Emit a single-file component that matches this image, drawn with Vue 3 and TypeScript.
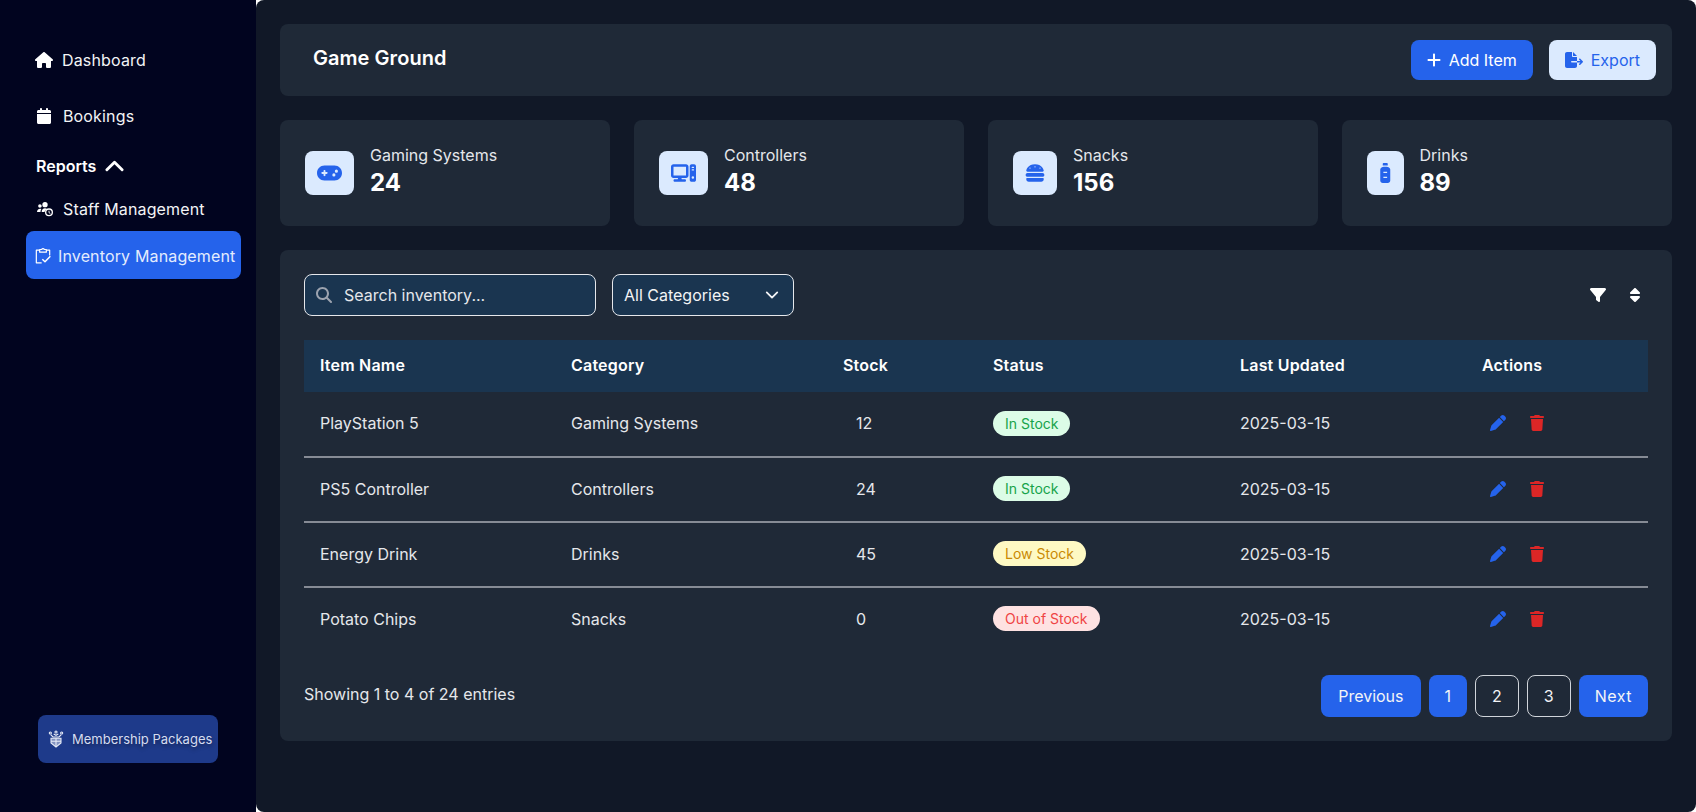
<script setup lang="ts">
interface Stat {
  label: string;
  value: number;
  viewBox: string;
  path: string;
}

interface InventoryRow {
  name: string;
  category: string;
  stock: number;
  status: string;
  statusClass: string;
  updated: string;
}

const stats: Stat[] = [
  {
    label: 'Gaming Systems',
    value: 24,
    viewBox: '0 0 640 512',
    path: 'M192 64C86 64 0 150 0 256S86 448 192 448H448c106 0 192-86 192-192s-86-192-192-192H192zM496 168a40 40 0 1 1 0 80 40 40 0 1 1 0-80zM392 304a40 40 0 1 1 80 0 40 40 0 1 1 -80 0zM168 200c0-13.3 10.7-24 24-24s24 10.7 24 24v32h32c13.3 0 24 10.7 24 24s-10.7 24-24 24H216v32c0 13.3-10.7 24-24 24s-24-10.7-24-24V280H136c-13.3 0-24-10.7-24-24s10.7-24 24-24h32V200z',
  },
  {
    label: 'Controllers',
    value: 48,
    viewBox: '0 0 640 512',
    path: 'M384 96V320H64L64 96H384zM64 32C28.7 32 0 60.7 0 96V320c0 35.3 28.7 64 64 64H181.3l-10.7 32H96c-17.7 0-32 14.3-32 32s14.3 32 32 32H352c17.7 0 32-14.3 32-32s-14.3-32-32-32H277.3l-10.7-32H384c35.3 0 64-28.7 64-64V96c0-35.3-28.7-64-64-64H64zm464 0c-26.5 0-48 21.5-48 48V432c0 26.5 21.5 48 48 48h64c26.5 0 48-21.5 48-48V80c0-26.5-21.5-48-48-48H528zm16 64h32c8.8 0 16 7.2 16 16s-7.2 16-16 16H544c-8.8 0-16-7.2-16-16s7.2-16 16-16zm-16 80c0-8.8 7.2-16 16-16h32c8.8 0 16 7.2 16 16s-7.2 16-16 16H544c-8.8 0-16-7.2-16-16zm32 160a32 32 0 1 1 0 64 32 32 0 1 1 0-64z',
  },
  {
    label: 'Snacks',
    value: 156,
    viewBox: '0 0 512 512',
    path: 'M61.1 224C45 224 32 211 32 194.9c0-1.9 .2-3.7 .6-5.6C37.9 168.3 78.8 32 256 32s218.1 136.3 223.4 157.3c.5 1.9 .6 3.7 .6 5.6c0 16.1-13 29.1-29.1 29.1H61.1zM144 128a16 16 0 1 0 -32 0 16 16 0 1 0 32 0zm240 16a16 16 0 1 0 0-32 16 16 0 1 0 0 32zM272 96a16 16 0 1 0 -32 0 16 16 0 1 0 32 0zM16 304c0-26.5 21.5-48 48-48H448c26.5 0 48 21.5 48 48s-21.5 48-48 48H64c-26.5 0-48-21.5-48-48zm16 96c0-8.8 7.2-16 16-16H464c8.8 0 16 7.2 16 16v16c0 35.3-28.7 64-64 64H96c-35.3 0-64-28.7-64-64V400z',
  },
  {
    label: 'Drinks',
    value: 89,
    viewBox: '0 0 320 512',
    path: 'M120 0h80c13.3 0 24 10.7 24 24V64H96V24C96 10.7 106.7 0 120 0zM32 168c0-20 10-38 27-48l15-10c14-9 31-14 48-14h76c17 0 34 5 48 14l15 10c17 10 27 28 27 48V448c0 35-29 64-64 64H96c-35 0-64-29-64-64zM112 224v32h96v-32zM112 352v32h96v-32z',
  },
];

const rows: InventoryRow[] = [
  { name: 'PlayStation 5', category: 'Gaming Systems', stock: 12, status: 'In Stock', statusClass: 'in', updated: '2025-03-15' },
  { name: 'PS5 Controller', category: 'Controllers', stock: 24, status: 'In Stock', statusClass: 'in', updated: '2025-03-15' },
  { name: 'Energy Drink', category: 'Drinks', stock: 45, status: 'Low Stock', statusClass: 'low', updated: '2025-03-15' },
  { name: 'Potato Chips', category: 'Snacks', stock: 0, status: 'Out of Stock', statusClass: 'out', updated: '2025-03-15' },
];
</script>

<template>
  <div class="page">
    <!-- Sidebar -->
    <aside class="sidebar">
      <nav class="nav">
        <a class="nav-link nav-main">
          <svg class="nav-icon home" viewBox="0 0 576 512" fill="currentColor">
            <path d="M575.8 255.5c0 18-15 32.1-32 32.1h-32l.7 160.2c0 2.7-.2 5.4-.5 8.1V472c0 22.1-17.9 40-40 40H456c-1.1 0-2.2 0-3.3-.1c-1.4 .1-2.8 .1-4.2 .1H416 392c-22.1 0-40-17.9-40-40V448 384c0-17.7-14.3-32-32-32H256c-17.7 0-32 14.3-32 32v64 24c0 22.1-17.9 40-40 40H160 128.1c-1.5 0-3-.1-4.5-.2c-1.2 .1-2.4 .2-3.6 .2H104c-22.1 0-40-17.9-40-40V360c0-.9 0-1.9 .1-2.8V287.6H32c-18 0-32-14-32-32.1c0-9 3-17 10-24L266.4 8c7-7 15-8 22-8s15 2 21 7L564.8 231.5c8 7 12 15 11 24z" />
          </svg>
          Dashboard
        </a>
        <a class="nav-link nav-main nav-bookings">
          <svg class="nav-icon calendar" viewBox="0 0 448 512" fill="currentColor">
            <path d="M96 32V64H48C21.5 64 0 85.5 0 112v48H448V112c0-26.5-21.5-48-48-48H352V32c0-17.7-14.3-32-32-32s-32 14.3-32 32V64H160V32c0-17.7-14.3-32-32-32S96 14.3 96 32zM448 192H0V464c0 26.5 21.5 48 48 48H400c26.5 0 48-21.5 48-48V192z" />
          </svg>
          Bookings
        </a>
        <div class="nav-group">
          Reports
          <svg class="group-chevron" viewBox="0 0 20 12" fill="none" stroke="currentColor" stroke-width="3" stroke-linecap="round" stroke-linejoin="round">
            <polyline points="2 10 10 2 18 10" />
          </svg>
        </div>
        <a class="nav-link nav-staff">
          <svg class="nav-icon calendar" viewBox="0 0 24 24" fill="currentColor">
            <circle cx="12" cy="5.5" r="4" />
            <circle cx="4.4" cy="7.5" r="2.7" />
            <path d="M0 16.5c0-3 2-5 4.6-5 .8 0 1.5 .2 2 .5-.9 1.1-1.4 2.6-1.4 4.5z" />
            <path d="M7 16.5c0-3.6 2.2-5.5 5-5.5 1.2 0 2.3 .3 3.1 1-1.9 .7-3.3 2.4-3.8 4.5z" />
            <circle cx="18" cy="17" r="5" fill="none" stroke="currentColor" stroke-width="2" />
            <path d="M18 14.5v3l2 1.2" fill="none" stroke="currentColor" stroke-width="1.4" />
          </svg>
          Staff Management
        </a>
        <a class="nav-link nav-active">
          <svg class="nav-icon clip" viewBox="0 0 24 24" fill="none" stroke="currentColor" stroke-width="1.8" stroke-linejoin="round">
            <path d="M7 4H2v19h8" />
            <path d="M17 4h5v8" />
            <path d="M7 7V3h3a2.2 2.2 0 0 1 4 0h3v4z" />
            <path d="M11 17.5l4 4 8-8.5" stroke-width="2.2" />
          </svg>
          <span class="nav-active-text">Inventory Management</span>
        </a>
      </nav>

      <button type="button" class="membership">
        <svg class="crest" viewBox="0 0 24 26" fill="none" stroke="currentColor" stroke-width="1.6">
          <circle cx="3.5" cy="4" r="1.6" />
          <circle cx="12" cy="2.5" r="1.6" />
          <circle cx="20.5" cy="4" r="1.6" />
          <path d="M4 6.5l3.5 3.5h9l3.5-3.5M8.5 5.5L12 7.5l3.5-2" />
          <path d="M4.5 12h15v7l-7.5 6-7.5-6z" fill="currentColor" fill-opacity="0.5" />
          <path d="M12 12v13M4.5 16.5h15" />
        </svg>
        Membership Packages
      </button>
    </aside>

    <!-- Main content -->
    <main class="main">
      <header class="topbar">
        <h1 class="title">Game Ground</h1>
        <div class="topbar-actions">
          <button type="button" class="btn btn-primary">
            <svg class="btn-icon-plus" viewBox="0 0 448 512" fill="currentColor">
              <path d="M256 80c0-17.7-14.3-32-32-32s-32 14.3-32 32V224H48c-17.7 0-32 14.3-32 32s14.3 32 32 32H192V432c0 17.7 14.3 32 32 32s32-14.3 32-32V288H400c17.7 0 32-14.3 32-32s-14.3-32-32-32H256V80z" />
            </svg>
            Add Item
          </button>
          <button type="button" class="btn btn-light">
            <svg class="btn-icon-export" viewBox="0 0 576 512" fill="currentColor">
              <path d="M0 64C0 28.7 28.7 0 64 0H224V128c0 17.7 14.3 32 32 32H384V288H216c-13.3 0-24 10.7-24 24s10.7 24 24 24H384V448c0 35.3-28.7 64-64 64H64c-35.3 0-64-28.7-64-64V64zM384 336V288H494.1l-39-39c-9.4-9.4-9.4-24.6 0-33.9s24.6-9.4 33.9 0l80 80c9.4 9.4 9.4 24.6 0 33.9l-80 80c-9.4 9.4-24.6 9.4-33.9 0s-9.4-24.6 0-33.9l39-39H384zm0-208H256V0L384 128z" />
            </svg>
            Export
          </button>
        </div>
      </header>

      <section class="stats">
        <div v-for="stat in stats" :key="stat.label" class="stat-card">
          <div class="stat-icon">
            <svg :viewBox="stat.viewBox" fill="currentColor" fill-rule="evenodd">
              <path :d="stat.path" />
            </svg>
          </div>
          <div class="stat-text">
            <div class="stat-label">{{ stat.label }}</div>
            <div class="stat-value">{{ stat.value }}</div>
          </div>
        </div>
      </section>

      <section class="panel">
        <div class="toolbar">
          <div class="search">
            <svg class="search-icon" viewBox="0 0 512 512" fill="currentColor">
              <path d="M416 208c0 45.9-14.9 88.3-40 122.7L502.6 457.4c12.5 12.5 12.5 32.8 0 45.3s-32.8 12.5-45.3 0L330.7 376c-34.4 25.2-76.8 40-122.7 40C93.1 416 0 322.9 0 208S93.1 0 208 0S416 93.1 416 208zM208 352a144 144 0 1 0 0-288 144 144 0 1 0 0 288z" />
            </svg>
            <input class="search-input" type="text" placeholder="Search inventory..." />
          </div>
          <button type="button" class="select">
            All Categories
            <svg class="select-chevron" viewBox="0 0 24 24" fill="none" stroke="currentColor" stroke-width="2.4" stroke-linecap="round" stroke-linejoin="round">
              <polyline points="5 8.5 12 15.5 19 8.5" />
            </svg>
          </button>
          <div class="toolbar-icons">
            <svg class="tool-filter" viewBox="0 0 512 512" fill="currentColor">
              <path d="M3.9 54.9C10.5 40.9 24.5 32 40 32H472c15.5 0 29.5 8.9 36.1 22.9s4.6 30.5-5.2 42.5L320 320.9V448c0 12.1-6.8 23.2-17.7 28.6s-23.8 4.3-33.5-3l-64-48c-8.1-6-12.8-15.5-12.8-25.6V320.9L9 97.3C-.7 85.4-2.8 68.8 3.9 54.9z" />
            </svg>
            <svg class="tool-sort" viewBox="0 0 320 512" fill="currentColor">
              <path d="M137.4 41.4c12.5-12.5 32.8-12.5 45.3 0l128 128c9.2 9.2 11.9 22.9 6.9 34.9s-16.6 19.8-29.6 19.8H32c-12.9 0-24.6-7.8-29.6-19.8s-2.2-25.7 6.9-34.9l128-128zm0 429.3l-128-128c-9.2-9.2-11.9-22.9-6.9-34.9s16.6-19.8 29.6-19.8H288c12.9 0 24.6 7.8 29.6 19.8s2.2 25.7-6.9 34.9l-128 128c-12.5 12.5-32.8 12.5-45.3 0z" />
            </svg>
          </div>
        </div>

        <table class="table">
          <colgroup>
            <col style="width: 251px" />
            <col style="width: 272px" />
            <col style="width: 150px" />
            <col style="width: 247px" />
            <col style="width: 242px" />
            <col style="width: 182px" />
          </colgroup>
          <thead>
            <tr>
              <th>Item Name</th>
              <th>Category</th>
              <th>Stock</th>
              <th>Status</th>
              <th>Last Updated</th>
              <th>Actions</th>
            </tr>
          </thead>
          <tbody>
            <tr v-for="row in rows" :key="row.name">
              <td>{{ row.name }}</td>
              <td>{{ row.category }}</td>
              <td class="cell-stock">{{ row.stock }}</td>
              <td><span class="badge" :class="`badge-${row.statusClass}`">{{ row.status }}</span></td>
              <td>{{ row.updated }}</td>
              <td>
                <div class="row-actions">
                  <svg class="act-edit" viewBox="0 0 512 512" fill="currentColor">
                    <path d="M362.7 19.3L314.3 67.7 444.3 197.7l48.4-48.4c25-25 25-65.5 0-90.5L453.3 19.3c-25-25-65.5-25-90.5 0zm-71 71L58.6 323.5c-10.4 10.4-18 23.3-22.2 37.4L1 481.2C-1.5 489.7 .8 498.8 7 505s15.3 8.5 23.7 6.1l120.3-35.4c14.1-4.2 27-11.8 37.4-22.2L421.7 220.3 291.7 90.3z" />
                  </svg>
                  <svg class="act-delete" viewBox="0 0 448 512" fill="currentColor">
                    <path d="M135.2 17.7L128 32H32C14.3 32 0 46.3 0 64S14.3 96 32 96H416c17.7 0 32-14.3 32-32s-14.3-32-32-32H320l-7.2-14.3C307.4 6.8 296.3 0 284.2 0H163.8c-12.1 0-23.2 6.8-28.6 17.7zM416 128H32L53.2 467c1.6 25.3 22.6 45 47.9 45H346.9c25.3 0 46.3-19.7 47.9-45L416 128z" />
                  </svg>
                </div>
              </td>
            </tr>
          </tbody>
        </table>

        <div class="table-footer">
          <span class="entries">Showing 1 to 4 of 24 entries</span>
          <div class="pagination">
            <button type="button" class="page-btn page-blue page-prev">Previous</button>
            <button type="button" class="page-btn page-blue">1</button>
            <button type="button" class="page-btn page-outline">2</button>
            <button type="button" class="page-btn page-outline">3</button>
            <button type="button" class="page-btn page-blue page-next">Next</button>
          </div>
        </div>
      </section>
    </main>
  </div>
</template>

<style>
html,
body {
  margin: 0;
  background: #ffffff;
}
</style>

<style scoped>
.page {
  display: flex;
  height: 812px;
  overflow: hidden;
  font-family: Inter, "Liberation Sans", sans-serif;
  font-size: 16px;
  line-height: 24px;
  color: #ffffff;
}

button,
input {
  font-family: inherit;
}

/* Sidebar */
.sidebar {
  width: 256px;
  flex-shrink: 0;
  display: flex;
  flex-direction: column;
  background: #01041f;
  box-sizing: border-box;
  padding: 36px 15px 49px 26px;
}

.nav {
  display: flex;
  flex-direction: column;
}

.nav-link {
  display: flex;
  align-items: center;
  font-weight: 400;
  letter-spacing: 0.15px;
  color: #f3f4f6;
}

.nav-main {
  height: 48px;
  padding-left: 9px;
  gap: 9px;
}

.nav-bookings {
  margin-top: 8px;
  padding-left: 11px;
  gap: 12px;
}

.nav-icon {
  flex-shrink: 0;
  height: 16px;
  color: #ffffff;
}

.home {
  width: 18px;
}

.calendar {
  width: 14px;
}

.nav-group {
  display: flex;
  align-items: center;
  gap: 9px;
  height: 24px;
  margin-top: 14px;
  margin-bottom: 11px;
  padding-left: 10px;
  font-weight: 600;
}

.group-chevron {
  width: 19px;
  height: 12px;
}

.nav-staff {
  height: 40px;
  margin-bottom: 2px;
  padding-left: 11px;
  gap: 12px;
}

.nav-staff .nav-icon {
  width: 16px;
  margin-right: -2px;
}

.nav-active {
  height: 48px;
  padding-left: 9px;
  gap: 7px;
  border-radius: 8px;
  background: #2563eb;
  color: #e3ecfd;
  white-space: nowrap;
}

.nav-active-text {
  padding-top: 2px;
}

.clip {
  width: 16px;
  height: 17px;
}

.membership {
  display: flex;
  align-items: center;
  gap: 8px;
  width: 180px;
  height: 48px;
  margin-top: auto;
  margin-left: 12px;
  padding: 0 0 0 10px;
  border: none;
  border-radius: 8px;
  background: #1e3a8a;
  color: #d5dcf0;
  font-size: 13px;
  white-space: nowrap;
  text-shadow: 0 2px 4px rgba(0, 0, 0, 0.45);
}

.crest {
  flex-shrink: 0;
  width: 16px;
  height: 18px;
  color: #e8ecf7;
}

/* Main */
.main {
  flex: 1;
  min-width: 0;
  box-sizing: border-box;
  padding: 24px;
  border-radius: 8px;
  background: #111827;
}

.topbar {
  display: flex;
  align-items: center;
  justify-content: space-between;
  height: 72px;
  box-sizing: border-box;
  padding: 0 16px 0 33px;
  margin-bottom: 24px;
  border-radius: 8px;
  background: #1f2937;
}

.title {
  margin: 0 0 4px;
  font-size: 20px;
  line-height: 28px;
  font-weight: 600;
  letter-spacing: 0.05px;
}

.topbar-actions {
  display: flex;
  gap: 16px;
}

.btn {
  display: flex;
  align-items: center;
  gap: 8px;
  height: 40px;
  padding: 0 16px;
  border: none;
  border-radius: 8px;
  font-size: 16px;
}

.btn-primary {
  background: #2563eb;
  color: #ffffff;
}

.btn-light {
  background: #dbeafe;
  color: #2563eb;
}

.btn-icon-plus {
  width: 14px;
  height: 16px;
}

.btn-icon-export {
  width: 18px;
  height: 16px;
}

/* Stats */
.stats {
  display: grid;
  grid-template-columns: repeat(4, 1fr);
  gap: 24px;
  margin-bottom: 24px;
}

.stat-card {
  display: flex;
  align-items: center;
  gap: 16px;
  height: 106px;
  box-sizing: border-box;
  padding: 0 24px 0 25px;
  border-radius: 8px;
  background: #1f2937;
}

.stat-icon {
  display: flex;
  padding: 12px;
  border-radius: 8px;
  background: #dbeafe;
  color: #2563eb;
}

.stat-icon svg {
  height: 20px;
  width: auto;
  display: block;
}

.stat-text {
  padding-bottom: 4px;
}

.stat-label {
  color: #e5e7eb;
}

.stat-value {
  font-size: 24px;
  line-height: 32px;
  font-weight: 700;
}

/* Inventory panel */
.panel {
  height: 491px;
  box-sizing: border-box;
  padding: 24px;
  border-radius: 8px;
  background: #1f2937;
}

.toolbar {
  display: flex;
  align-items: center;
  gap: 16px;
  margin-bottom: 24px;
}

.search {
  position: relative;
  width: 292px;
}

.search-icon {
  position: absolute;
  left: 12px;
  top: 13px;
  width: 16px;
  height: 16px;
  color: #9ca3af;
}

.search-input {
  display: block;
  width: 100%;
  height: 42px;
  box-sizing: border-box;
  padding: 0 12px 0 39px;
  border: 1px solid #e5e7eb;
  border-radius: 8px;
  outline: none;
  background: #1a3550;
  color: #ffffff;
  font-size: 16px;
}

.search-input::placeholder {
  color: #e5e7eb;
  opacity: 1;
}

.select {
  display: flex;
  align-items: center;
  justify-content: space-between;
  width: 182px;
  height: 42px;
  box-sizing: border-box;
  padding: 0 12px 0 11px;
  border: 1px solid #e5e7eb;
  border-radius: 8px;
  background: #1a3550;
  color: #f3f4f6;
  font-size: 16px;
}

.select-chevron {
  width: 18px;
  height: 18px;
}

.toolbar-icons {
  display: flex;
  align-items: center;
  gap: 24px;
  margin-left: auto;
  padding-right: 8px;
  color: #ffffff;
}

.tool-filter {
  width: 16px;
  height: 16px;
}

.tool-sort {
  width: 10px;
  height: 16px;
}

.table {
  width: 1344px;
  table-layout: fixed;
  border-collapse: collapse;
}

.table th {
  height: 52px;
  box-sizing: border-box;
  padding: 0 16px 2px;
  background: #1a3550;
  text-align: left;
  font-weight: 600;
  letter-spacing: 0.2px;
}

.table td {
  height: 65px;
  box-sizing: border-box;
  padding: 0 16px 2px;
  border-bottom: 2px solid #868b95;
  color: #e5e7eb;
}

.table tbody tr:last-child td {
  border-bottom-color: transparent;
}

.cell-stock {
  padding-left: 29px !important;
}

.badge {
  display: inline-block;
  padding: 0 12px;
  border-radius: 999px;
  font-size: 14px;
  line-height: 25px;
}

.badge-in {
  background: #dcfce7;
  color: #16a34a;
}

.badge-low {
  background: #fef9c3;
  color: #ca8a04;
}

.badge-out {
  background: #fee2e2;
  color: #ef4444;
}

.row-actions {
  display: flex;
  align-items: center;
  gap: 24px;
  padding-left: 8px;
}

.act-edit {
  width: 16px;
  height: 16px;
  color: #2563eb;
}

.act-delete {
  width: 14px;
  height: 16px;
  color: #dc2626;
}

.table-footer {
  display: flex;
  align-items: center;
  justify-content: space-between;
  margin-top: 22px;
}

.entries {
  padding-bottom: 4px;
  color: #e5e7eb;
}

.pagination {
  display: flex;
  gap: 8px;
}

.page-btn {
  height: 42px;
  box-sizing: border-box;
  padding: 0 16px 1px;
  border-radius: 8px;
  font-size: 16px;
  color: #f3f4f6;
}

.page-prev {
  padding: 0 17px 1px;
}

.page-next {
  letter-spacing: 0.5px;
}

.page-blue {
  border: none;
  background: #2563eb;
}

.page-outline {
  border: 1px solid #d1d5db;
  background: transparent;
}
</style>
